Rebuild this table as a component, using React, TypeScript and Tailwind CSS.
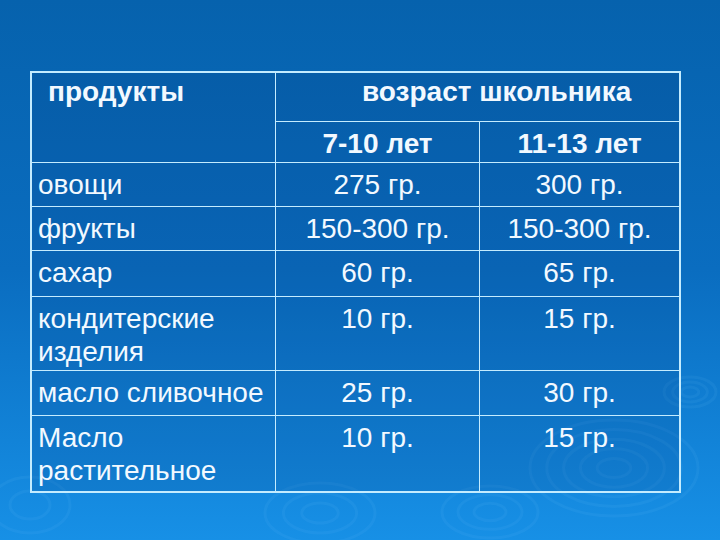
const FONT = { fontFamily: '"Liberation Sans", Arial, sans-serif' };

type Row = { name: string[]; a: string; b: string };

const ROWS: Row[] = [
  { name: ["овощи"], a: "275 гр.", b: "300 гр." },
  { name: ["фрукты"], a: "150-300 гр.", b: "150-300 гр." },
  { name: ["сахар"], a: "60 гр.", b: "65 гр." },
  { name: ["кондитерские", "изделия"], a: "10 гр.", b: "15 гр." },
  { name: ["масло сливочное"], a: "25 гр.", b: "30 гр." },
  { name: ["Масло", "растительное"], a: "10 гр.", b: "15 гр." },
];

// ripples on the backdrop: [cx, cy, rx, ry, rings]
const RIPPLES: [number, number, number, number, number][] = [
  [614, 468, 84, 48, 5],
  [690, 392, 26, 15, 3],
  [490, 512, 48, 26, 3],
  [320, 513, 55, 30, 3],
  [30, 505, 40, 28, 2],
];

function Ripples() {
  return (
    <svg className="absolute inset-0 pointer-events-none" width="720" height="540" viewBox="0 0 720 540">
      {RIPPLES.map(([cx, cy, rx, ry, n], i) => (
        <g key={i} fill="none" stroke="#7cc8ff" strokeOpacity="0.08" strokeWidth="3">
          {Array.from({ length: n }).map((_, k) => {
            const f = (k + 1) / n;
            return <ellipse key={k} cx={cx} cy={cy} rx={rx * f} ry={ry * f} />;
          })}
        </g>
      ))}
    </svg>
  );
}

export default function App() {
  const line = "border-[#c4ecff]";
  return (
    <div
      className="relative w-[720px] h-[540px] overflow-hidden bg-gradient-to-b from-[#0662ad] via-[#0a6dc0] to-[#1790e6] text-[#f2f9ff]"
      style={FONT}
    >
      <Ripples />
      <div className="relative pt-[71px] pl-[30px]">
        <div
          className={`grid grid-cols-[244px_204px_199px] grid-rows-[49px_41px_44px_44px_46px_74px_45px_75px] w-[651px] border-2 ${line} bg-[#00306e]/15 text-[28px] leading-[33px]`}
        >
          <div className={`row-span-2 border-r border-b ${line} pl-[16px] pt-[2px] font-bold`}>продукты</div>
          <div className={`col-span-2 border-b ${line} pl-[86px] pt-[2px] font-bold`}>возраст школьника</div>
          <div className={`border-r border-b ${line} text-center pt-[5px] font-bold`}>7-10 лет</div>
          <div className={`border-b ${line} text-center pt-[5px] font-bold`}>11-13 лет</div>
          {ROWS.map((r, i) => {
            const last = i === ROWS.length - 1;
            const b = last ? "" : "border-b";
            return [
              <div key={`n${i}`} className={`border-r ${b} ${line} pl-[6px] pt-[5px]`}>
                {r.name.map((t) => (
                  <div key={t}>{t}</div>
                ))}
              </div>,
              <div key={`a${i}`} className={`border-r ${b} ${line} text-center pt-[5px]`}>
                {r.a}
              </div>,
              <div key={`b${i}`} className={`${b} ${line} text-center pt-[5px]`}>
                {r.b}
              </div>,
            ];
          })}
        </div>
      </div>
    </div>
  );
}
